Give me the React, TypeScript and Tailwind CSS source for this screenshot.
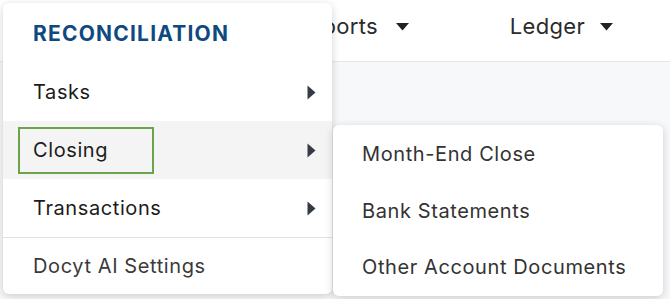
import { useState } from "react";

const font = { fontFamily: 'Inter, "Liberation Sans", Arial, sans-serif' };

const Caret = ({ className }: { className?: string }) => (
  <svg width="13" height="8" viewBox="0 0 13 8" className={className}>
    <path d="M0 0h13L6.5 7.5z" fill="currentColor" />
  </svg>
);

const RightArrow = () => (
  <svg width="9" height="15" viewBox="0 0 9 15" className="text-[#343b45]">
    <path d="M0.5 0.5L8.5 7.5L0.5 14.5z" fill="currentColor" />
  </svg>
);

const mainItems = ["Tasks", "Closing", "Transactions"];
const subItems = ["Month-End Close", "Bank Statements", "Other Account Documents"];

export default function App() {
  const [active] = useState("Closing");

  return (
    <div className="relative w-[670px] h-[299px] overflow-hidden bg-[#f7f8fa]" style={font}>
      {/* Top nav */}
      <div className="h-[62px] bg-white border-b border-[#e6e8eb] flex items-center justify-end pr-[57px] pb-[8px] gap-[101px] text-[22px] tracking-[0.3px] text-[#2b2b2b]">
        <div className="flex items-center gap-[18px]">
          <span>Reports</span>
          <Caret className="text-[#222]" />
        </div>
        <div className="flex items-center gap-[15px]">
          <span>Ledger</span>
          <Caret className="text-[#222]" />
        </div>
      </div>

      {/* Main dropdown */}
      <div className="absolute left-[3px] top-[3px] w-[329px] h-[291px] bg-white rounded-md shadow-[0_2px_8px_rgba(0,0,0,0.18)] flex flex-col overflow-hidden text-[20px] tracking-[0.6px]">
        <div className="h-[60px] flex items-center pl-[30px] pt-[1px] text-[21px] font-bold text-[#0e4a80] tracking-[1.2px]">
          RECONCILIATION
        </div>
        {mainItems.map((item) => {
          const isActive = item === active;
          return (
            <div
              key={item}
              className={`h-[58px] flex items-center justify-between pr-[16px] ${isActive ? "bg-[#f4f4f4]" : ""}`}
            >
              {isActive ? (
                <div className="ml-[15px] w-[136px] h-[47px] border-2 border-[#6ba44c] flex items-center pl-[13px] text-[#1c1c1c]">
                  {item}
                </div>
              ) : (
                <span className="pl-[30px] text-[#1c1c1c]">{item}</span>
              )}
              <RightArrow />
            </div>
          );
        })}
        <div className="border-t border-[#e2e2e2] flex-1 flex items-center pl-[30px] text-[#3a3a3a]">
          Docyt AI Settings
        </div>
      </div>

      {/* Submenu */}
      <div className="absolute left-[333px] top-[125px] w-[330px] h-[171px] bg-white rounded-md shadow-[0_2px_8px_rgba(0,0,0,0.18)] flex flex-col py-[0.5px] text-[20px] tracking-[0.6px]">
        {subItems.map((s) => (
          <div key={s} className="h-[57px] flex items-center pl-[29px] text-[#333]">
            {s}
          </div>
        ))}
      </div>
    </div>
  );
}
